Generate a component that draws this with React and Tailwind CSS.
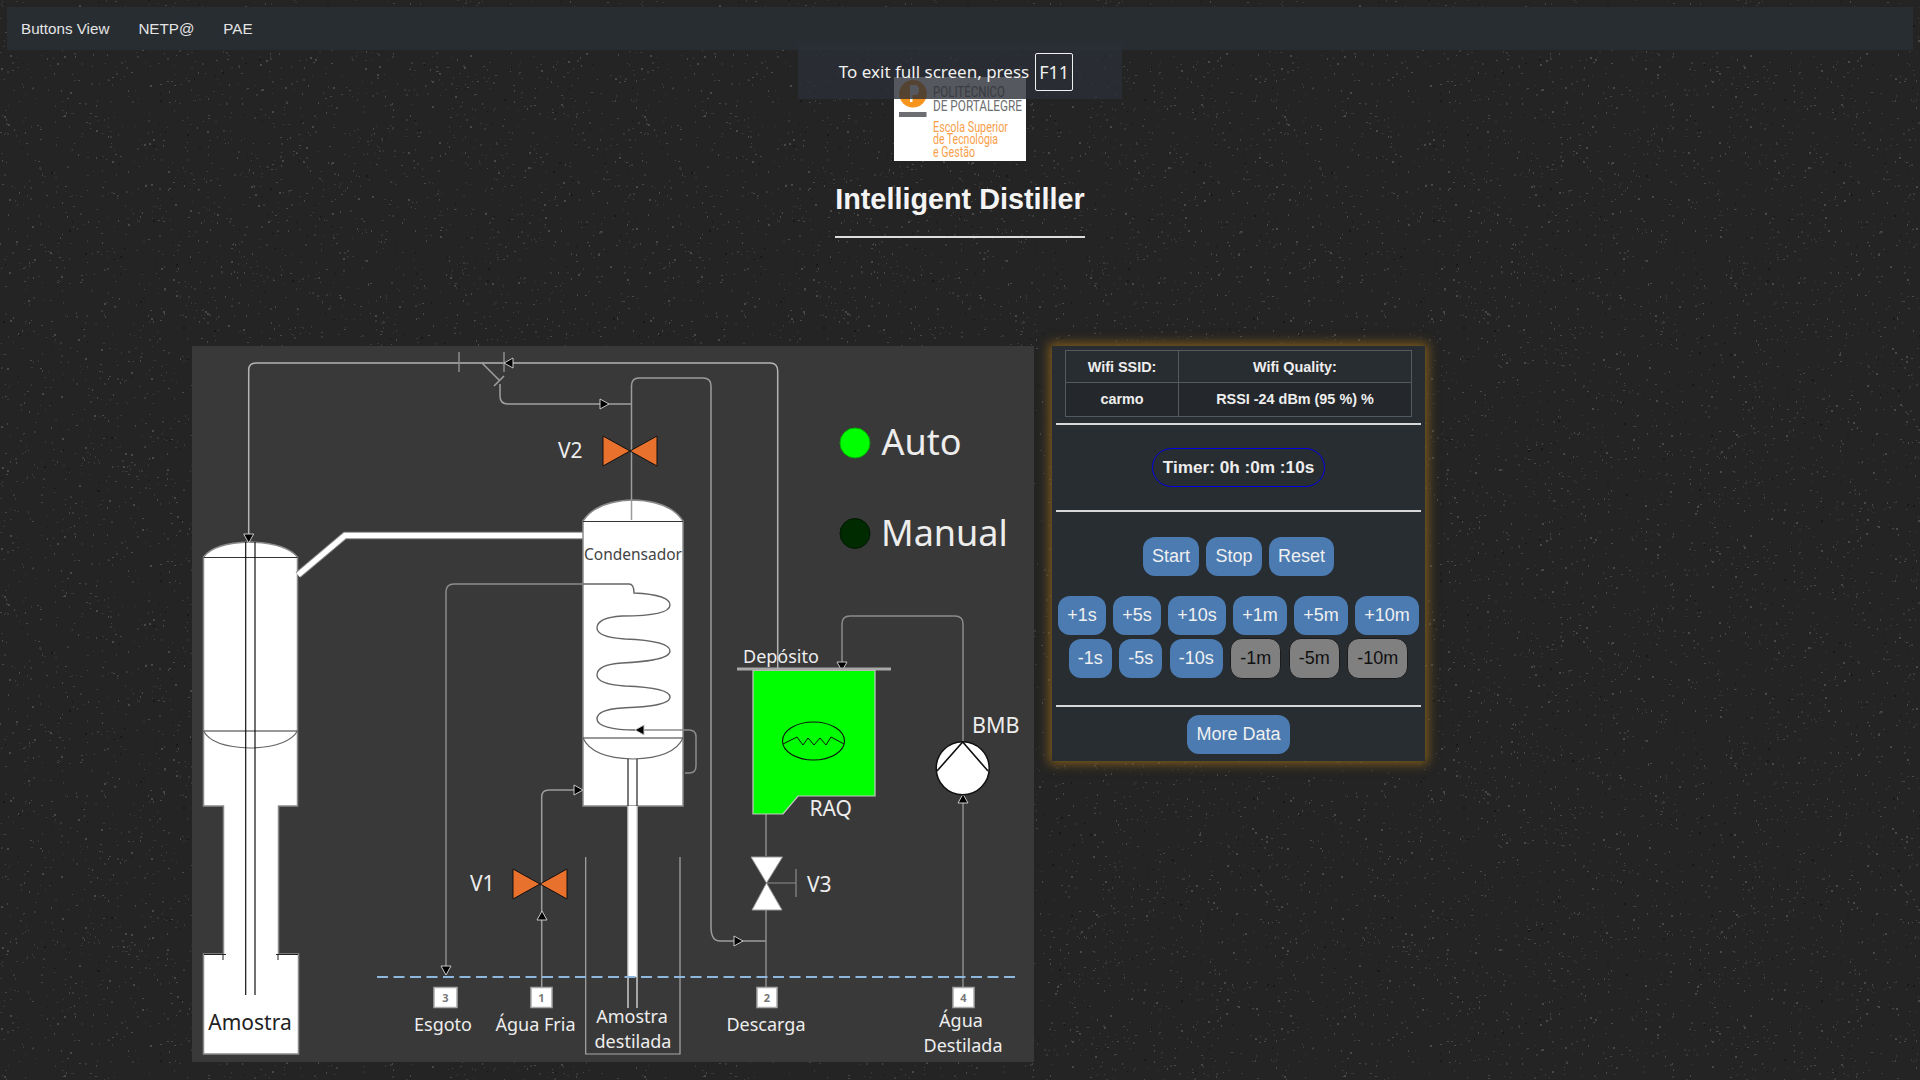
import React from 'react';

// seeded speckle so the wall texture stays the same on every load
function makeSpeckles() {
  let seed = 1337;
  const rnd = () => {
    seed = (seed * 16807) % 2147483647;
    return seed / 2147483647;
  };
  const dots = [];
  for (let i = 0; i < 3400; i++) {
    const r = rnd();
    dots.push({
      x: Math.floor(rnd() * 640),
      y: Math.floor(rnd() * 480),
      w: rnd() > 0.6 ? 2 : 1,
      h: rnd() > 0.6 ? 2 : 1,
      fill: r < 0.1 ? '#181818' : r < 0.65 ? '#383838' : '#484848',
    });
  }
  return dots;
}
const speckles = makeSpeckles();

const plusButtons = ['+1s', '+5s', '+10s', '+1m', '+5m', '+10m'];
const minusButtons = ['-1s', '-5s', '-10s'];
const disabledButtons = ['-1m', '-5m', '-10m'];

function Btn({ children }) {
  return (
    <button className="h-[39px] px-[9px] rounded-[12px] bg-[#4b7bb1] text-[18px] text-[#f0f0f0]">
      {children}
    </button>
  );
}

function GreyBtn({ children }) {
  return (
    <button className="h-[41px] px-[9px] rounded-[12px] border border-[#1c1c1c] bg-[#808080] text-[18px] text-[#101010]">
      {children}
    </button>
  );
}

function Arrow({ x, y, dir }) {
  const l = 9;
  const w = 5;
  const pts = {
    right: [[x, y], [x - l, y - w], [x - l, y + w]],
    left: [[x, y], [x + l, y - w], [x + l, y + w]],
    up: [[x, y], [x - w, y + l], [x + w, y + l]],
    down: [[x, y], [x - w, y - l], [x + w, y - l]],
  }[dir];
  return <polygon points={pts.map((p) => p.join(',')).join(' ')} fill="#000" stroke="#c8c8c8" strokeWidth="1" />;
}

function Pipe({ d, color = '#8c8c8c', width = 1.5 }) {
  return <path d={d} fill="none" stroke={color} strokeWidth={width} />;
}

function Bowtie({ cx, cy }) {
  return (
    <g fill="#e8712e" stroke="#111" strokeWidth="1">
      <polygon points={`${cx - 27},${cy - 15} ${cx},${cy} ${cx - 27},${cy + 15}`} />
      <polygon points={`${cx + 27},${cy - 15} ${cx},${cy} ${cx + 27},${cy + 15}`} />
    </g>
  );
}

function PortBox({ x, w, n }) {
  return (
    <g>
      <rect x={x} y="987.5" width={w} height="20" fill="#fff" stroke="#a8a8a8" strokeWidth="1.5" />
      <text x={x + w / 2} y="1001.5" textAnchor="middle" fontSize="11" fontWeight="700" fill="#777">{n}</text>
    </g>
  );
}

function Diagram() {
  return (
    <svg
      viewBox="192 346 842 716"
      className="block w-[842px] h-[716px] shrink-0 bg-[#393939]"
      style={{ fontFamily: '"Noto Sans", sans-serif' }}
    >
      {/* column and flask */}
      <path
        d="M203.5 806 V557 Q214 543 250 542 Q286 543 297.5 557 V806 H278.5 V954 H298.5 V1054 H203.5 V954 H223.5 V806 Z"
        fill="#fff"
        stroke="#8a8a8a"
        strokeWidth="1.5"
      />
      <path d="M203.5 557.5 H297.5 M203.5 731 H297.5" stroke="#333" strokeWidth="1.2" />
      <path d="M203.5 731 Q212 747 250 748 Q288 747 297.5 731" fill="none" stroke="#666" strokeWidth="1.2" />
      <path d="M245.7 542 V995 M255 542 V995" stroke="#111" strokeWidth="1.2" />
      <path d="M204 954.5 H226 M276 954.5 H298 M223 954 V960 M278 954 V960" stroke="#222" strokeWidth="1" />
      <text x="250" y="1030" textAnchor="middle" fontSize="21" fill="#222">Amostra</text>

      {/* vapour line */}
      <path d="M298 575 L345 535.5 H583" fill="none" stroke="#8a8a8a" strokeWidth="7.5" />
      <path d="M298 575 L345 535.5 H583" fill="none" stroke="#fff" strokeWidth="5.5" />

      {/* condenser */}
      <path
        d="M583 806 V521 Q596 501 633 500 Q670 501 683 521 V806 Z"
        fill="#fff"
        stroke="#8a8a8a"
        strokeWidth="1.5"
      />
      <path d="M583 521.5 H683 M583 738 H683" stroke="#333" strokeWidth="1.2" />
      <path d="M583 738 Q592 758 633 759 Q674 758 683 738" fill="none" stroke="#666" strokeWidth="1.2" />
      <text x="633" y="560" textAnchor="middle" fontSize="15.5" fill="#444">Condensador</text>
      <path
        d="M583 584 H629 Q634 584 634 593 C655 594 670 597 670 605 C670 615 640 616 622 616 C606 617 597 621 597 628 C597 635 610 638 625 639 C650 640 670 643 670 651 C670 660 640 662 622 663 C606 664 597 668 597 675 C597 682 610 685 625 686 C650 687 670 690 670 697 C670 706 640 707 622 708 C606 709 597 713 597 719 C597 726 612 730 635 730"
        fill="none"
        stroke="#666"
        strokeWidth="1.4"
      />

      {/* sample outlet */}
      <rect x="628" y="806" width="9" height="171" fill="#fff" />
      <path d="M628 806 V1008 M637 806 V1008" stroke="#d4d4d4" strokeWidth="1.4" />
      <path d="M628 759 V806 M637 759 V806" stroke="#222" strokeWidth="1.2" />
      <path d="M585.7 857 V1054 H680 V857" fill="none" stroke="#a8a8a8" strokeWidth="1.2" />

      {/* pipes */}
      <Pipe color="#b4b4b4" d="M248.7 536 V370 Q248.7 363 256 363 H770 Q777.7 363 777.7 371 V669" />
      <Pipe d="M459 352 V372 M504 352 V372" />
      <Pipe color="#a0a0a0" d="M482 363 L500 381 M494 386 L504 376 M500 384 V396 Q500 404 508 404 H631" />
      <Pipe d="M631.5 520 V386 Q631.5 378 639 378 H703 Q711 378 711 386 V927 Q711 941 720 941 H766" color="#9c9c9c" />
      <Pipe d="M446 968 V592 Q446 584 454 584 H583" />
      <Pipe d="M541.7 988 V797 Q541.7 790 549 790 H578" color="#9c9c9c" />
      <Pipe d="M766 814 V856 M766 910 V988" />
      <Pipe d="M963 742 V624 Q963 616 955 616 H850 Q842 616 842 624 V662" />
      <Pipe d="M963 802 V988" />
      <Pipe d="M635 730 H689 Q696 730 696 737 V766 Q696 773 689 773 H685" />

      <Arrow x={504} y={363} dir="left" />
      <Arrow x={609} y={404} dir="right" />
      <Arrow x={248.7} y={543} dir="down" />
      <Arrow x={446} y={975} dir="down" />
      <Arrow x={583} y={790} dir="right" />
      <Arrow x={542} y={911} dir="up" />
      <Arrow x={635} y={730} dir="left" />
      <Arrow x={743} y={941} dir="right" />
      <Arrow x={842} y={671} dir="down" />
      <Arrow x={963} y={794} dir="up" />

      {/* valves */}
      <Bowtie cx={630} cy={451} />
      <Bowtie cx={540} cy={884} />
      <g fill="#fff" stroke="#999" strokeWidth="1">
        <polygon points="751,857 782.5,857 766.5,883" />
        <polygon points="766.5,883 752,910 782,910" />
      </g>
      <path d="M766.5 883 H796 M796 869 V897" stroke="#8c8c8c" strokeWidth="1.2" />

      {/* deposit */}
      <path
        d="M753 670.5 H875 V796 H798 L783 814 H753 Z"
        fill="#00ff00"
        stroke="#c8c8c8"
        strokeWidth="1.2"
      />
      <path d="M737 669 H891" stroke="#a8a8a8" strokeWidth="3" />
      <ellipse cx="813.5" cy="741" rx="31" ry="19" fill="none" stroke="#111" strokeWidth="1.1" />
      <path
        d="M783 744 L797 737 L803 745 L808 738 L814 745 L820 738 L826 745 L831 737 L844 744"
        fill="none"
        stroke="#111"
        strokeWidth="1"
      />

      {/* pump */}
      <circle cx="962.7" cy="768.3" r="26.5" fill="#fff" stroke="#111" strokeWidth="1.5" />
      <path d="M937 771 L962.7 742 L988 771" fill="none" stroke="#111" strokeWidth="1.6" />

      {/* water line */}
      <path d="M377 977 H1015" stroke="#8db7dc" strokeWidth="2" strokeDasharray="11 5.5" />

      <PortBox x={434} w={23} n="3" />
      <PortBox x={531} w={21} n="1" />
      <PortBox x={757} w={20} n="2" />
      <PortBox x={953} w={21} n="4" />

      {/* mode lamps */}
      <circle cx="855" cy="443" r="15" fill="#00ff00" stroke="#00b000" strokeWidth="1" />
      <circle cx="855" cy="533.5" r="15" fill="#002a00" stroke="#001800" strokeWidth="1" />

      <g fill="#ededed">
        <text x="881.5" y="455" fontSize="36">Auto</text>
        <text x="881" y="546" fontSize="36">Manual</text>
        <text x="558" y="458" fontSize="21">V2</text>
        <text x="470" y="891" fontSize="21">V1</text>
        <text x="807" y="892" fontSize="21">V3</text>
        <text x="809.5" y="816" fontSize="21">RAQ</text>
        <text x="972" y="733" fontSize="21.5">BMB</text>
        <text x="743" y="663" fontSize="18">Depósito</text>
        <text x="443" y="1031" textAnchor="middle" fontSize="18">Esgoto</text>
        <text x="535.5" y="1031" textAnchor="middle" fontSize="18">Água Fria</text>
        <text x="632" y="1023" textAnchor="middle" fontSize="18">Amostra</text>
        <text x="633" y="1048" textAnchor="middle" fontSize="18">destilada</text>
        <text x="766" y="1031" textAnchor="middle" fontSize="18">Descarga</text>
        <text x="961" y="1027" textAnchor="middle" fontSize="18">Água</text>
        <text x="963" y="1052" textAnchor="middle" fontSize="18">Destilada</text>
      </g>
    </svg>
  );
}

function Logo() {
  return (
    <svg
      viewBox="894 77 132 84"
      className="block w-[132px] h-[84px] bg-white mx-auto overflow-visible"
      style={{ fontFamily: '"Roboto", sans-serif' }}
    >
      <circle cx="913" cy="93.7" r="13.8" fill="#f7941d" />
      <path d="M910 85 H915 Q919 85 919 90 Q919 95 915 95 H912.5 V102 H910 Z" fill="#fff" />
      <rect x="899" y="112" width="27.5" height="5" fill="#6d6e71" />
      <g fill="#6d6e71" fontSize="14">
        <text x="933" y="97" textLength="72" lengthAdjust="spacingAndGlyphs">POLITÉCNICO</text>
        <text x="933" y="111" textLength="89" lengthAdjust="spacingAndGlyphs">DE PORTALEGRE</text>
      </g>
      <g fill="#f9a04a" fontSize="14">
        <text x="933" y="131.5" textLength="75" lengthAdjust="spacingAndGlyphs">Escola Superior</text>
        <text x="933" y="144" textLength="65" lengthAdjust="spacingAndGlyphs">de Tecnologia</text>
        <text x="933" y="156.5" textLength="42" lengthAdjust="spacingAndGlyphs">e Gestão</text>
      </g>
    </svg>
  );
}

function ControlPanel() {
  return (
    <div className="w-[373px] h-[415px] shrink-0 bg-[#282d32] pt-[4px] shadow-[0_0_10px_3px_#7d5a1c] text-[#eeeeee]">
      <table className="w-[347px] h-[66px] mx-auto border-collapse text-[14.4px] font-bold text-center">
        <tbody>
          <tr className="h-[32px]">
            <td className="w-[113px] pt-[2px] border border-[#555a5e]">Wifi SSID:</td>
            <td className="pt-[2px] border border-[#555a5e]">Wifi Quality:</td>
          </tr>
          <tr className="h-[34px] bg-[#24282c]">
            <td className="border border-[#555a5e]">carmo</td>
            <td className="border border-[#555a5e]">RSSI -24 dBm (95 %) %</td>
          </tr>
        </tbody>
      </table>

      <div className="h-[2px] mx-[4px] mt-[6px] bg-[#d8d8d8]" />

      <div className="flex justify-center mt-[23px]">
        <div className="h-[39px] w-[173px] flex items-center justify-center rounded-full border border-[#0000e0] text-[17.2px] font-bold">
          Timer: 0h :0m :10s
        </div>
      </div>

      <div className="h-[2px] mx-[4px] mt-[23px] bg-[#d8d8d8]" />

      <div className="flex justify-center gap-[7.5px] mt-[25px]">
        <Btn>Start</Btn>
        <Btn>Stop</Btn>
        <Btn>Reset</Btn>
      </div>

      <div className="flex justify-center gap-[7.5px] mt-[20px]">
        {plusButtons.map((b) => (
          <Btn key={b}>{b}</Btn>
        ))}
      </div>

      <div className="flex justify-center items-center gap-[7.5px] mt-[3px]">
        {minusButtons.map((b) => (
          <Btn key={b}>{b}</Btn>
        ))}
        {disabledButtons.map((b) => (
          <GreyBtn key={b}>{b}</GreyBtn>
        ))}
      </div>

      <div className="h-[2px] mx-[4px] mt-[26px] bg-[#d8d8d8]" />

      <div className="flex justify-center mt-[8px]">
        <Btn>More Data</Btn>
      </div>
    </div>
  );
}

export default function App() {
  return (
    <div className="relative w-full h-[1080px] overflow-hidden bg-[#242424] font-['Liberation_Sans',Arial,sans-serif]">
      {/* wall texture */}
      <svg className="absolute inset-0 w-full h-full" aria-hidden="true">
        <defs>
          <pattern id="speckle" width="640" height="480" patternUnits="userSpaceOnUse">
            {speckles.map((d, i) => (
              <rect key={i} x={d.x} y={d.y} width={d.w} height={d.h} fill={d.fill} />
            ))}
          </pattern>
        </defs>
        <rect width="100%" height="100%" fill="url(#speckle)" />
      </svg>

      <div className="relative pt-[7px]">
        <nav className="flex items-center h-[43px] pt-[2px] mx-[7px] px-[7px] bg-[#282d32] text-[15.2px] text-[#e4e4e4]">
          <a className="px-[7px] mr-[15px]">Buttons View</a>
          <a className="px-[7px] mr-[15px]">NETP@</a>
          <a className="px-[7px]">PAE</a>
        </nav>

        <div className="mt-[27px]">
          <Logo />
        </div>

        <div className="flex justify-center mt-[18px]">
          <div className="w-[250px]">
            <h1 className="text-center text-[28.8px] leading-[40px] font-bold text-[#f4f4f4] whitespace-nowrap">
              Intelligent Distiller
            </h1>
            <div className="h-[2px] mt-[17px] bg-[#dcdcdc]" />
          </div>
        </div>

        <div className="flex items-start gap-[18px] pl-[192px] mt-[108px]">
          <Diagram />
          <ControlPanel />
        </div>
      </div>

      {/* browser's fullscreen hint, sits over the logo */}
      <div className="absolute top-[45px] left-[798px] w-[324px] h-[54px] pr-[8px] flex items-center justify-center gap-[6px] bg-[#2a2e36]/80 font-['Noto_Sans',sans-serif] text-[17px] text-[#f0f0f0]">
        <span>To exit full screen, press</span>
        <span className="w-[38px] h-[38px] flex items-center justify-center rounded-[2px] border border-[#f0f0f0] text-[18px]">F11</span>
      </div>
    </div>
  );
}
